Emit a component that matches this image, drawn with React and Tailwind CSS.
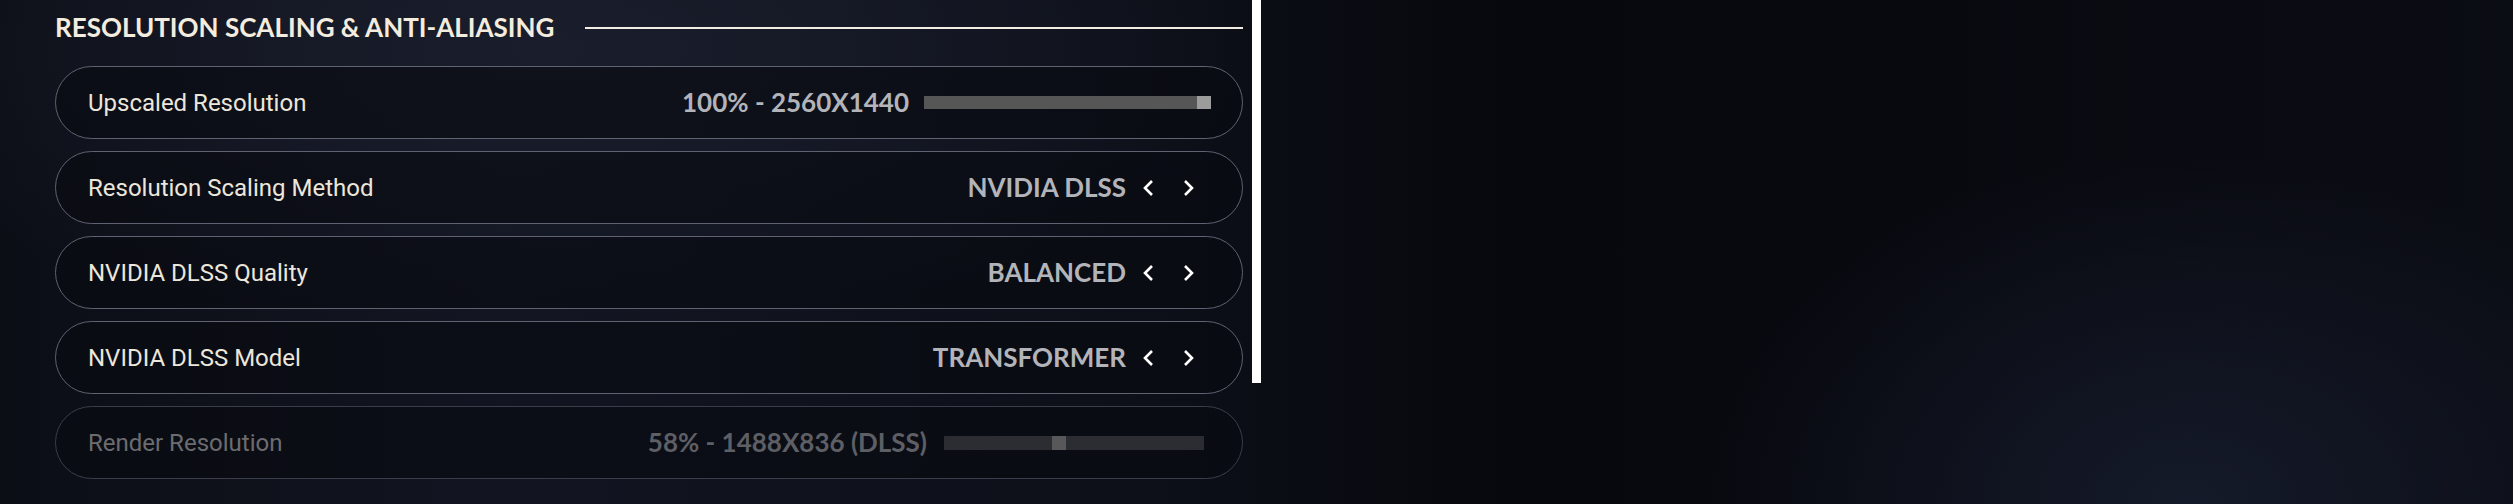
import React from 'react';

const titleFont = { fontFamily: 'Lato, "Noto Sans", sans-serif' };
const labelFont = { fontFamily: 'Roboto, "Liberation Sans", sans-serif' };

const Chevron = ({ dir = 'left', className = '' }) => (
  <svg width="12" height="18" viewBox="0 0 12 18" className={className} fill="none">
    {dir === 'left' ? (
      <path d="M10 2 L3 9 L10 16" stroke="white" strokeWidth="2.6" strokeLinejoin="miter" />
    ) : (
      <path d="M2 2 L9 9 L2 16" stroke="white" strokeWidth="2.6" strokeLinejoin="miter" />
    )}
  </svg>
);

const Row = ({ label, disabled, children, className = '' }) => (
  <div
    className={`flex h-[73px] items-center justify-between rounded-full border bg-[#080a11]/60 pl-[32px] ${
      disabled ? 'border-[#3a3e4b]' : 'border-[#5e6271]'
    } ${className}`}
  >
    <span
      className={`text-[24px] ${disabled ? 'text-[#6c6c70]' : 'text-[#ece6db]'}`}
      style={labelFont}
    >
      {label}
    </span>
    {children}
  </div>
);

const Picker = ({ value }) => (
  <div className="flex items-center">
    <span className="text-[26px] font-bold uppercase text-[#b3b4ba]" style={titleFont}>
      {value}
    </span>
    <Chevron dir="left" className="ml-[16px]" />
    <Chevron dir="right" className="ml-[29px]" />
  </div>
);

export default function App() {
  return (
    <div className="flex h-[504px] w-full overflow-hidden bg-[radial-gradient(ellipse_700px_300px_at_22%_10%,#1a1e2c_0%,transparent_100%),radial-gradient(ellipse_500px_350px_at_87%_100%,#151a2a_0%,transparent_100%),linear-gradient(90deg,#0c0e16_0%,#121521_20%,#0d1019_45%,#07080d_60%,#08090f_75%,#0b0d14_100%)]">
      <div className="w-[1243px] shrink-0 pl-[55px]">
        <div className="flex h-[55px] items-center gap-[31px]">
          <h2 className="whitespace-nowrap text-[26px] font-bold text-[#f3ecdf]" style={titleFont}>
            RESOLUTION SCALING &amp; ANTI-ALIASING
          </h2>
          <div className="h-[2px] flex-1 bg-[#f1ece4]" />
        </div>

        <div className="mt-[11px] flex flex-col gap-[12px]">
          <Row label="Upscaled Resolution" className="pr-[31px]">
            <div className="flex items-center gap-[15px]">
              <span className="text-[26px] font-bold text-[#b3b4ba]" style={titleFont}>
                100% - 2560X1440
              </span>
              <div className="flex h-[13px] w-[287px] justify-end bg-[#565656]">
                <div className="h-full w-[14px] bg-[#9c9c9c]" />
              </div>
            </div>
          </Row>

          <Row label="Resolution Scaling Method" className="pr-[47px]">
            <Picker value="NVIDIA DLSS" />
          </Row>

          <Row label="NVIDIA DLSS Quality" className="pr-[47px]">
            <Picker value="BALANCED" />
          </Row>

          <Row label="NVIDIA DLSS Model" className="pr-[47px]">
            <Picker value="TRANSFORMER" />
          </Row>

          <Row label="Render Resolution" disabled className="pr-[38px]">
            <div className="flex items-center gap-[17px]">
              <span className="text-[26px] font-bold text-[#5d5f65]" style={titleFont}>
                58% - 1488X836 (DLSS)
              </span>
              <div className="h-[14px] w-[260px] bg-[#2c2d32] pl-[108px]">
                <div className="h-full w-[14px] bg-[#58585b]" />
              </div>
            </div>
          </Row>
        </div>
      </div>

      <div className="ml-[9px] h-[383px] w-[9px] shrink-0 bg-white" />
    </div>
  );
}
